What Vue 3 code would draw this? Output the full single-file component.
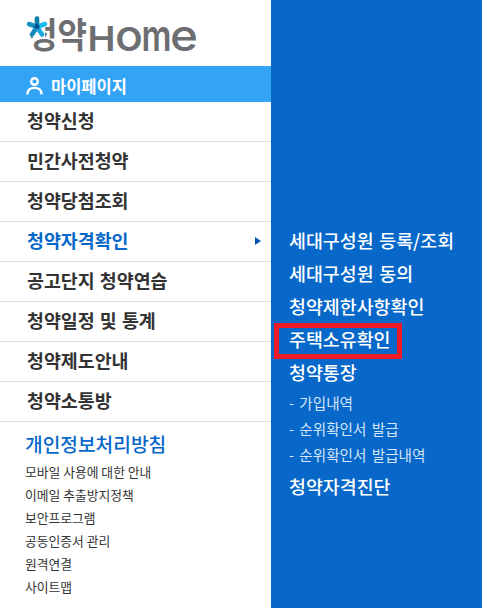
<template>
  <div class="page">
    <aside class="sidebar">
      <header class="logo">
        <svg width="180" height="54" viewBox="0 0 180 54">
          <text class="logo-ko" x="3" y="38" textLength="59" lengthAdjust="spacingAndGlyphs">청약</text>
          <path d="M0 0H24V15H20V27H0Z" fill="#fff" />
          <g fill="none" stroke-width="4.6" stroke-linecap="round">
            <path d="M12 17V8.5" stroke="#087fa8" />
            <path d="M12 17L4 14" stroke="#1792c0" />
            <path d="M12 17L20 14" stroke="#18bdf0" />
            <path d="M12 17L7 24.5" stroke="#1689b8" />
            <path d="M12 17L17 24.5" stroke="#18a9dc" />
          </g>
          <circle cx="12" cy="16.5" r="2.5" fill="#064f91" />
          <g class="logo-en">
            <text class="cap" x="62.5" y="41" textLength="28" lengthAdjust="spacingAndGlyphs">H</text>
            <text x="90" y="41" textLength="28" lengthAdjust="spacingAndGlyphs">o</text>
            <text class="wide" x="116.5" y="41" textLength="30" lengthAdjust="spacingAndGlyphs">m</text>
            <text x="145" y="41" textLength="28" lengthAdjust="spacingAndGlyphs">e</text>
          </g>
        </svg>
      </header>

      <div class="mypage">
        <svg width="18" height="18" viewBox="0 0 18 18" fill="none" stroke="#fff" stroke-width="2.4">
          <circle cx="8.5" cy="4.5" r="3.3" />
          <path d="M1.4 17.5C1.4 13 4.2 10.9 8.5 10.9S15.6 13 15.6 17.5" />
        </svg>
        <span>마이페이지</span>
      </div>

      <ul class="menu">
        <li v-for="item in menus" :key="item" :class="{ active: item === current }">
          <span>{{ item }}</span>
          <i v-if="item === current" class="arrow"></i>
        </li>
      </ul>

      <footer class="links">
        <strong>개인정보처리방침</strong>
        <a v-for="link in links" :key="link">{{ link }}</a>
      </footer>
    </aside>

    <nav class="submenu">
      <div
        v-for="item in subMenus"
        :key="item.label"
        class="sub-item"
        :class="{ child: item.child, marked: item.marked }"
      >
        <span>{{ item.label }}</span>
      </div>
    </nav>
  </div>
</template>

<script setup>
const current = '청약자격확인';

const menus = [
  '청약신청',
  '민간사전청약',
  '청약당첨조회',
  '청약자격확인',
  '공고단지 청약연습',
  '청약일정 및 통계',
  '청약제도안내',
  '청약소통방'
];

const links = [
  '모바일 사용에 대한 안내',
  '이메일 추출방지정책',
  '보안프로그램',
  '공동인증서 관리',
  '원격연결',
  '사이트맵'
];

const subMenus = [
  { label: '세대구성원 등록/조회' },
  { label: '세대구성원 동의' },
  { label: '청약제한사항확인' },
  { label: '주택소유확인', marked: true },
  { label: '청약통장' },
  { label: '- 가입내역', child: true },
  { label: '- 순위확인서 발급', child: true },
  { label: '- 순위확인서 발급내역', child: true },
  { label: '청약자격진단' }
];
</script>

<style>
body {
  margin: 0;
}
</style>

<style scoped>
.page {
  display: flex;
  width: 482px;
  height: 608px;
  overflow: hidden;
  font-family: "Noto Sans CJK KR", sans-serif;
  white-space: nowrap;
}

.sidebar {
  width: 271px;
  background: #fff;
}

.logo {
  box-sizing: border-box;
  height: 66px;
  padding: 10px 0 0 25px;
}

.logo svg {
  display: block;
}

.logo-ko {
  fill: #6d6e71;
  font-size: 35px;
  font-weight: 700;
}

.logo-en {
  fill: #6d6e71;
  font-family: Inter, sans-serif;
  font-size: 44px;
  font-weight: 500;
}

.logo-en .cap {
  font-size: 34px;
  font-weight: 600;
}

.logo-en .wide {
  font-weight: 600;
}

.mypage {
  box-sizing: border-box;
  display: flex;
  align-items: center;
  gap: 7px;
  height: 36px;
  padding: 4px 0 0 26px;
  background: #33a3f6;
  color: #fff;
  font-size: 16.5px;
  font-weight: 700;
}

.menu {
  margin: 0;
  padding: 0;
  list-style: none;
}

.menu li {
  box-sizing: border-box;
  display: flex;
  align-items: center;
  justify-content: space-between;
  height: 40px;
  padding: 0 10px 0 27px;
  border-bottom: 1px solid #ddd;
  color: #333;
  font-size: 18.4px;
  font-weight: 700;
  line-height: 37px;
  word-spacing: 1px;
}

.menu li span {
  padding-bottom: 2px;
}

.menu li.active {
  color: #0768c9;
}

.arrow {
  margin-bottom: 1px;
  border: 4px solid transparent;
  border-left: 6px solid #0755b5;
  border-right: 0;
}

.links {
  display: flex;
  flex-direction: column;
  padding: 7px 0 0 25px;
  color: #333;
  font-size: 12.8px;
  line-height: 23px;
}

.links strong {
  color: #0768c9;
  font-size: 19.2px;
  font-weight: 500;
  line-height: 31px;
}

.submenu {
  box-sizing: border-box;
  flex: 1;
  padding: 224px 0 0 18px;
  background: #0768c9;
  color: #fff;
}

.sub-item {
  height: 33px;
  font-size: 18.4px;
  font-weight: 500;
  line-height: 33px;
  word-spacing: 1.5px;
}

.sub-item.child {
  height: 26px;
  color: #d5e6f8;
  font-size: 14.6px;
  font-weight: 400;
  line-height: 28px;
  word-spacing: 2px;
}

.child + .sub-item:not(.child) {
  padding-top: 3px;
}

.sub-item.marked {
  position: relative;
}

.marked::after {
  content: '';
  position: absolute;
  top: 0;
  left: -15px;
  box-sizing: border-box;
  width: 128px;
  height: 36px;
  border: 5px solid #ed1c24;
}
</style>
